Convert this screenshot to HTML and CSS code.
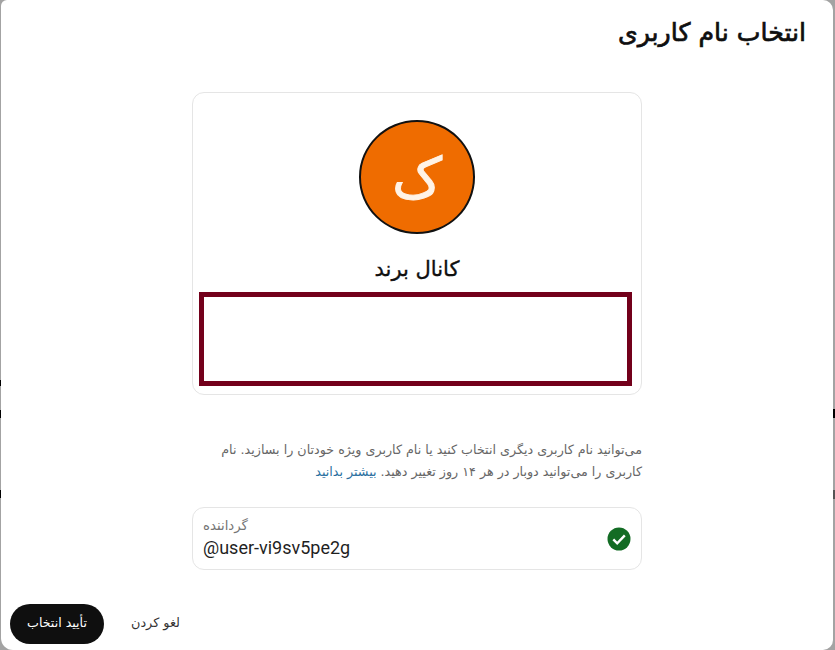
FILE: index.html
```html
<!DOCTYPE html>
<html lang="fa" dir="rtl">
<head>
<meta charset="utf-8">
<title>انتخاب نام کاربری</title>
<link rel="stylesheet" href="styles.css">
</head>
<body>
<div class="edge-marks" aria-hidden="true">
  <i class="mark mark-l1"></i><i class="mark mark-l2"></i><i class="mark mark-l3"></i>
  <i class="mark mark-r1"></i><i class="mark mark-r2"></i>
</div>
<main class="dialog">
  <h1 class="title">انتخاب نام کاربری</h1>
  <div class="content">
    <section class="card">
      <div class="avatar"><span>ک</span></div>
      <h2 class="channel">کانال برند</h2>
      <div class="redacted"></div>
    </section>
    <p class="help">می‌توانید نام کاربری دیگری انتخاب کنید یا نام کاربری ویژه خودتان را بسازید. نام کاربری را می‌توانید دوبار در هر ۱۴ روز تغییر دهید. <a href="#">بیشتر بدانید</a></p>
    <div class="field">
      <div class="field-text">
        <label class="field-label">گرداننده</label>
        <div class="field-value" dir="ltr">@user-vi9sv5pe2g</div>
      </div>
      <svg class="check" viewBox="0 0 24 24" width="24" height="24" aria-hidden="true">
        <circle cx="12" cy="12" r="11.5" fill="#136c24"/>
        <path d="M6.3 12.4l3.9 3.9 7.6-7.9" fill="none" stroke="#fff" stroke-width="2.4"/>
      </svg>
    </div>
  </div>
  <footer class="actions">
    <button class="cancel" type="button">لغو کردن</button>
    <button class="confirm" type="button">تأیید انتخاب</button>
  </footer>
</main>
</body>
</html>
```
FILE: styles.css
```css
* { box-sizing: border-box; }
html, body { height: 100%; }
body {
  margin: 0;
  height: 650px;
  overflow: hidden;
  background: #a3a3a3;
  padding: 0 2px 0 1px;
  position: relative;
  font-family: "DejaVu Sans", sans-serif;
}
.dialog {
  height: 650px;
  background: #fff;
  border-radius: 6px 10px 10px 12px;
  display: flex;
  flex-direction: column;
  position: relative;
  z-index: 0;
}
.title {
  margin: 0;
  padding: 17px 27px 0 0;
  font-size: 25.2px;
  line-height: 32px;
  font-weight: 400;
  -webkit-text-stroke: 0.7px #0f0f0f;
  color: #0f0f0f;
}
.content {
  width: 450px;
  margin: 43px auto 0;
}
.card {
  height: 303px;
  border: 1px solid #e5e5e5;
  border-radius: 12px;
  display: flex;
  flex-direction: column;
  align-items: center;
  padding: 27px 6px 8px;
}
.avatar {
  width: 116px;
  height: 116px;
  border-radius: 50%;
  background: #ef6c00;
  border: 2px solid #111;
  display: flex;
  align-items: center;
  justify-content: center;
  color: #fff3e6;
  font-size: 56px;
  line-height: 1;
  -webkit-text-stroke: 0.9px #fff3e6;
}
.avatar span { margin-top: 4px; }
.channel {
  margin: 21px 0 0;
  font-size: 21px;
  line-height: 28px;
  font-weight: 400;
  -webkit-text-stroke: 0.35px #0f0f0f;
  color: #0f0f0f;
}
.redacted {
  width: 433px;
  height: 96px;
  margin: 9px 3px 0 0;
  border: 5px solid #73001b;
  background: #fff;
}
.help {
  margin: 44px 0 0;
  font-size: 12.7px;
  line-height: 21.5px;
  color: #666;
}
.help a { color: #2a6f9f; text-decoration: none; }
.field {
  margin-top: 25px;
  height: 63px;
  border: 1px solid #e5e5e5;
  border-radius: 12px;
  display: flex;
  flex-direction: row-reverse;
  align-items: center;
  justify-content: space-between;
  padding: 0 10px;
}
.field-text { flex: 1; padding-bottom: 1px; }
.field-label {
  display: block;
  font-size: 13.3px;
  line-height: 20px;
  color: #757575;
  text-align: left;
  direction: rtl;
}
.field-value {
  font-family: Roboto, sans-serif;
  font-size: 18px;
  line-height: 24px;
  color: #1f1f1f;
  text-align: left;
}
.check { flex: none; }
.actions {
  margin-top: auto;
  padding: 0 0 6px 9px;
  display: flex;
  flex-direction: row;
  justify-content: flex-end;
  align-items: center;
  gap: 27px;
}
button {
  border: 0;
  background: none;
  font-family: "DejaVu Sans", sans-serif;
  font-size: 12.6px;
  line-height: 14px;
  cursor: pointer;
}
.confirm {
  height: 40px;
  width: 94px;
  padding: 0 0 2px;
  border-radius: 20px;
  background: #0f0f0f;
  color: #fff;
}
.cancel { color: #333; font-size: 12.8px; padding: 0 0 2px; }
.mark { position: absolute; background: #000; display: block; z-index: 1; }
.mark-l1 { left: 0; top: 380px; width: 1px; height: 6px; }
.mark-l2 { left: 0; top: 410px; width: 1px; height: 8px; }
.mark-l3 { left: 0; top: 490px; width: 1px; height: 8px; }
.mark-r1 { right: 0; top: 409px; width: 2px; height: 9px; }
.mark-r2 { right: 0; top: 490px; width: 2px; height: 9px; background: #555; }
```
